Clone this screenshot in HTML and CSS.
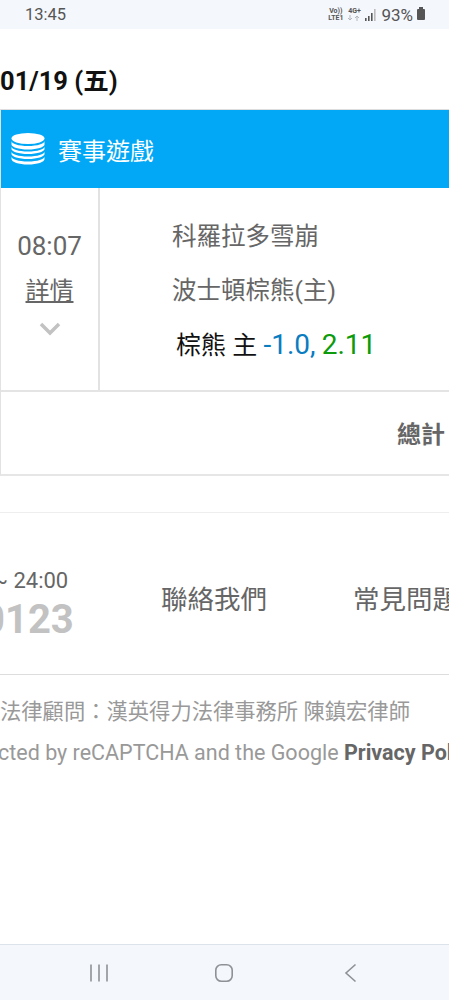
FILE: index.html
```html
<!DOCTYPE html>
<html lang="zh-Hant">
<head>
  <meta charset="UTF-8">
  <meta name="viewport" content="width=device-width, initial-scale=1.0">
  <title>賽事遊戲</title>
  <link rel="stylesheet" href="styles.css">
</head>
<body>
  <header class="statusbar">
    <span class="clock">13:45</span>
    <div class="status-right">
      <span class="net"><span>Vo))</span><span>LTE1</span></span>
      <span class="net net-4g"><span>4G+</span>
        <svg width="14" height="6" viewBox="0 0 14 6"><path d="M3 0v5M1 3l2 2 2-2M10 6V1M8 3l2-2 2 2" fill="none" stroke="#b4b8bd" stroke-width="1"/></svg>
      </span>
      <svg class="signal" width="12" height="12" viewBox="0 0 12 12"><path d="M0 9h1.6v3H0zM3 7h1.6v5H3zM6 4h1.6v8H6z" fill="#555"/><path d="M9 0h1.6v12H9z" fill="#bbb"/></svg>
      <span class="battery-text">93%</span>
      <span class="battery"></span>
    </div>
  </header>

  <main class="main">
    <h2 class="date">01/19 (五)</h2>

    <section class="board">
      <div class="board-head">
        <svg class="coins" width="34" height="32" viewBox="0 0 34 32">
          <ellipse cx="17" cy="5.5" rx="16.5" ry="5.5" fill="#fff"/>
          <path d="M.5 8v3.500c0 2.500 7 5 16.500 5s16.500-2.500 16.500-5V8c0 2.700-7 5-16.500 5S.5 10.700.5 8zM.5 13.500V16c0 2.500 7 5 16.500 5s16.500-2.500 16.500-5v-2.500c0 2.700-7 5-16.500 5s-16.500-2.300-16.500-5zM.5 18.500V21c0 2.500 7 5 16.500 5s16.500-2.500 16.500-5v-2.500c0 2.700-7 5-16.500 5s-16.500-2.300-16.500-5zM.5 23.500V26c0 3 7 5.500 16.500 5.500s16.500-2.500 16.500-5.500v-2.500c0 2.700-7 5-16.500 5s-16.500-2.300-16.500-5z" fill="#fff"/>
        </svg>
        <span>賽事遊戲</span>
      </div>

      <div class="game">
        <div class="game-time">
          <span class="time">08:07</span>
          <a class="detail" href="#">詳情</a>
          <svg class="chevron" width="22" height="14" viewBox="0 0 22 14"><path d="M2 2l9 9 9-9" fill="none" stroke="#c2c2c2" stroke-width="3.500"/></svg>
        </div>
        <div class="game-info">
          <p class="team">科羅拉多雪崩</p>
          <p class="team">波士頓棕熊(主)</p>
          <p class="bet">棕熊 主 <span class="line">-1.0,</span> <span class="odds">2.11</span></p>
        </div>
      </div>

      <div class="total">總計</div>
    </section>

    <footer class="footer">
      <div class="contact">
        <div class="hours">
          <span class="hours-time">~ 24:00</span>
          <span class="phone">0123</span>
        </div>
        <a class="contact-link" href="#">聯絡我們</a>
        <a class="contact-link" href="#">常見問題</a>
      </div>
      <p class="legal legal-cn">法律顧問：漢英得力法律事務所 陳鎮宏律師</p>
      <p class="legal legal-en">cted by reCAPTCHA and the Google <b>Privacy Policy</b></p>
    </footer>
  </main>

  <nav class="navbar">
    <svg width="20" height="20" viewBox="0 0 20 20"><path d="M2 1.500v17M10 1.500v17M18 1.500v17" fill="none" stroke="#8e9296" stroke-width="1.600"/></svg>
    <svg width="20" height="20" viewBox="0 0 20 20"><rect x="1.800" y="1.800" width="16.400" height="16.400" rx="5.500" fill="none" stroke="#8e9296" stroke-width="1.600"/></svg>
    <svg width="14" height="20" viewBox="0 0 14 20"><path d="M11.500 1.500L2 10l9.500 8.500" fill="none" stroke="#8e9296" stroke-width="1.600"/></svg>
  </nav>
</body>
</html>
```

FILE: styles.css
```css
*{margin:0;padding:0;box-sizing:border-box}
html,body{height:100%}
body{width:449px;height:1000px;display:flex;flex-direction:column;overflow:hidden;background:#fff;font-family:'Roboto','Noto Sans CJK TC',sans-serif;color:#666}

.statusbar{height:29px;flex:none;background:#f4f7fb;display:flex;align-items:center;justify-content:space-between;padding:0 24px 0 25px}
.clock{font-size:16.5px;color:#555}
.status-right{display:flex;align-items:center;gap:4px;color:#555}
.net{display:flex;flex-direction:column;align-items:center;font-size:7px;line-height:7px;font-weight:700}
.battery-text{font-size:17px}
.battery{width:8px;height:11px;background:#555;border-radius:1px;position:relative}
.battery:before{content:"";position:absolute;top:-2px;left:2px;width:4px;height:2px;background:#555}

.main{flex:1;overflow:hidden}
.date{font-size:25.5px;line-height:34px;font-weight:700;color:#111;margin-top:35px;margin-bottom:11px;white-space:nowrap}

.board{border-top:1px solid #ddd;border-left:1px solid #e2e2e2;border-bottom:2px solid #e6e6e6}
.board-head{height:78px;background:#02a8f6;display:flex;align-items:center;gap:13px;padding-left:10px;color:#fff;font-size:24px}

.game{height:204px;display:flex;border-bottom:2px solid #e4e4e4}
.game-time{width:99px;flex:none;border-right:2px solid #e2e2e2;display:flex;flex-direction:column;align-items:center;padding-top:40px}
.time{font-size:26px;line-height:36px}
.detail{font-size:24px;line-height:36px;margin-top:9px;color:#666;text-decoration:underline}
.chevron{margin-top:13px}

.game-info{padding:29px 0 0 72px}
.team{font-size:24.5px;line-height:40px;margin-bottom:14px;color:#666;white-space:nowrap}
.bet{font-size:25px;line-height:40px;margin:1px 0 0 4px;color:#111;white-space:nowrap}
.line{font-size:28px;color:#0a7cc0}
.odds{font-size:28px;color:#0d9a0d}

.total{height:82px;display:flex;align-items:center;justify-content:flex-end;padding:0 4px 2px 0;font-size:24px;font-weight:700;color:#666}

.footer{margin-top:36px;border-top:1px solid #eee}
.contact{height:162px;display:flex;align-items:center;border-bottom:1px solid #ddd;white-space:nowrap}
.hours{width:161px;flex:none;display:flex;flex-direction:column;margin-top:22px}
.hours-time{font-size:22px;line-height:28px;color:#666;margin-left:-7px}
.phone{font-size:40px;line-height:46px;font-weight:700;color:#c2c2c2;margin:2px 0 0 -18px}
.contact-link{font-size:26.5px;color:#666;text-decoration:none;width:192px;flex:none;margin-top:8px}

.legal{font-size:21.3px;line-height:40px;color:#999;white-space:nowrap}
.legal-cn{margin-top:17px}
.legal-en{margin-top:1px;font-size:21.5px;margin-left:-2px}
.legal-en b{color:#666}

.navbar{height:56px;flex:none;background:#f4f7fb;border-top:1px solid #dde3ea;display:flex;align-items:center;padding:0 91px 0 89px;justify-content:space-between}
.navbar svg:nth-child(2){margin-left:-6px}
```
